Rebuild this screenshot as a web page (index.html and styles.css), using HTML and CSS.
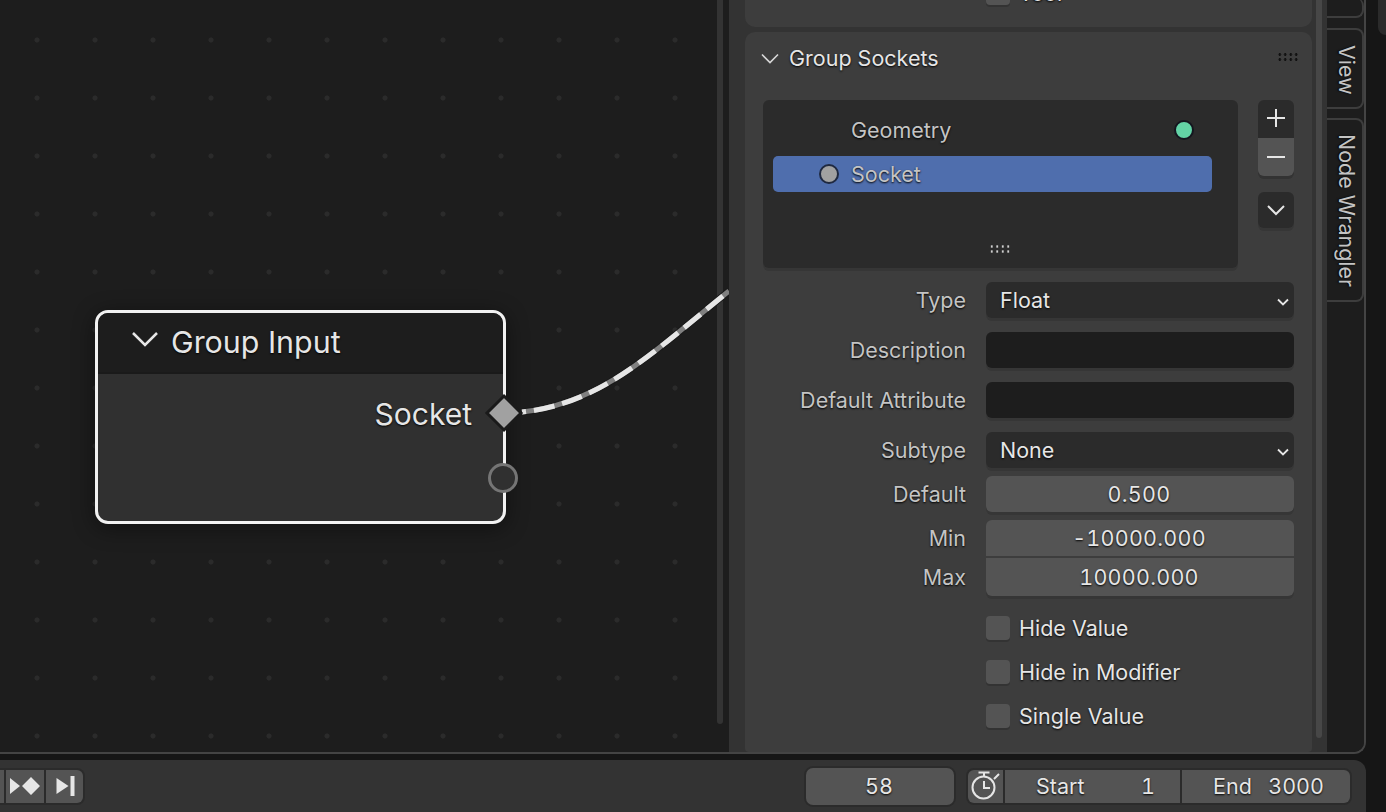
FILE: index.html
```html
<!DOCTYPE html>
<html lang="en">
<head>
    <meta charset="UTF-8">
    <title>Group Sockets</title>
    <link rel="stylesheet" href="styles.css">
</head>
<body>
  <div class="screen">
    <div class="corner-block"></div>

    <div class="editor">
      <!-- Node canvas -->
      <div class="canvas">
        <div class="canvas-scroll"></div>
        <svg class="wire" width="729" height="752" viewBox="0 0 729 752">
          <path class="wire-edge" d="M522 412 C600 404 650 355 729 291"/>
          <path class="wire-base" d="M522 412 C600 404 650 355 729 291"/>
          <path class="wire-dash" d="M522 412 C600 404 650 355 729 291"/>
        </svg>
        <div class="node">
          <div class="node-head">
            <svg class="node-arrow" width="28" height="18" viewBox="0 0 28 18"><path d="M2 2 L14 14 L26 2"/></svg>
            <span>Group Input</span>
          </div>
          <div class="node-body">
            <div class="node-output">Socket</div>
          </div>
        </div>
        <svg class="socket-diamond" width="40" height="40" viewBox="0 0 40 40"><path d="M20 3 L37 20 L20 37 L3 20 Z"/></svg>
        <div class="socket-empty"></div>
      </div>

      <!-- Sidebar -->
      <div class="sidebar">
        <div class="panel panel-cut">
          <div class="check-row cut-row">
            <div class="check"></div>
            <span>Tool</span>
          </div>
        </div>

        <div class="panel panel-main">
          <div class="panel-head">
            <svg class="panel-arrow" width="18" height="12" viewBox="0 0 18 12"><path d="M1 1.5 L9 9.5 L17 1.5"/></svg>
            <span>Group Sockets</span>
            <div class="grip grip-head"></div>
          </div>

          <div class="list-wrap">
            <div class="list-box">
              <div class="list-row">
                <span class="list-name">Geometry</span>
                <span class="dot dot-green"></span>
              </div>
              <div class="list-row list-row-active">
                <span class="dot dot-grey"></span>
                <span class="list-name">Socket</span>
              </div>
              <div class="grip grip-list"></div>
            </div>
            <div class="list-side">
              <div class="side-btn side-plus">
                <svg width="20" height="20" viewBox="0 0 20 20"><path d="M10 1 V19 M1 10 H19"/></svg>
              </div>
              <div class="side-btn side-minus">
                <svg width="20" height="20" viewBox="0 0 20 20"><path d="M1 10 H19"/></svg>
              </div>
              <div class="side-btn side-more">
                <svg width="20" height="12" viewBox="0 0 20 12"><path d="M2 2 L10 10 L18 2"/></svg>
              </div>
            </div>
          </div>

          <div class="prop-row row-type">
            <label>Type</label>
            <div class="field field-menu"><span>Float</span><svg width="12" height="8" viewBox="0 0 12 8"><path d="M1 1.5 L6 6.5 L11 1.5"/></svg></div>
          </div>
          <div class="prop-row row-text">
            <label>Description</label>
            <div class="field field-text"></div>
          </div>
          <div class="prop-row row-text">
            <label>Default Attribute</label>
            <div class="field field-text"></div>
          </div>
          <div class="prop-row row-text">
            <label>Subtype</label>
            <div class="field field-menu"><span>None</span><svg width="12" height="8" viewBox="0 0 12 8"><path d="M1 1.5 L6 6.5 L11 1.5"/></svg></div>
          </div>
          <div class="prop-row row-default">
            <label>Default</label>
            <div class="field field-num">0.500</div>
          </div>
          <div class="prop-row row-default">
            <label>Min</label>
            <div class="field field-num field-top">-10000.000</div>
          </div>
          <div class="prop-row row-max">
            <label>Max</label>
            <div class="field field-num field-bottom">10000.000</div>
          </div>

          <div class="check-row check-first"><div class="check"></div><span>Hide Value</span></div>
          <div class="check-row"><div class="check"></div><span>Hide in Modifier</span></div>
          <div class="check-row"><div class="check"></div><span>Single Value</span></div>
        </div>
        <div class="sidebar-scroll"></div>
      </div>

      <!-- Tabs -->
      <div class="tabs">
        <div class="tab tab-cut"></div>
        <div class="tab tab-view"><span>View</span></div>
        <div class="tab tab-wrangler"><span>Node Wrangler</span></div>
      </div>
    </div>

    <!-- Timeline -->
    <div class="timeline">
      <div class="btn-group play-group">
        <div class="play-btn play-stub"></div>
        <div class="play-btn play-key">
          <svg width="34" height="24" viewBox="0 0 34 24"><path d="M2 4 L12 12 L2 20 Z M23 3 L32 12 L23 21 L14 12 Z"/></svg>
        </div>
        <div class="play-btn play-end">
          <svg width="22" height="22" viewBox="0 0 22 22"><path d="M2.5 3 L14.5 11 L2.5 19 Z M16.5 1 H20.5 V21 H16.5 Z"/></svg>
        </div>
      </div>
      <div class="frame-now">58</div>
      <div class="btn-group range-group">
        <div class="range-seg range-icon">
          <svg width="30" height="32" viewBox="0 0 30 32">
            <path d="M7.5 2.5 H18.5 M13 2.5 V6"/>
            <circle cx="12.5" cy="17.5" r="11"/>
            <path d="M13 11 V18 H19 M23 9 L28 4"/>
          </svg>
        </div>
        <div class="range-seg range-start"><span>Start</span><span>1</span></div>
        <div class="range-seg range-end"><span>End</span><span>3000</span></div>
      </div>
    </div>
  </div>
</body>
</html>
```

FILE: styles.css
```css
* {
    box-sizing: border-box;
}

body {
    margin: 0;
    background-color: #161616;
    font-family: Inter, "Noto Sans", sans-serif;
    font-size: 21.5px;
    color: #e6e6e6;
    overflow: hidden;
}

svg {
    display: block;
    fill: none;
}

.screen {
    position: relative;
    width: 1386px;
    height: 812px;
    overflow: hidden;
}

.corner-block {
    position: absolute;
    left: 1378px;
    top: -10px;
    width: 30px;
    height: 45px;
    background: #2b2b2b;
    border-radius: 8px;
}

.editor {
    display: flex;
    width: 1366px;
    height: 754px;
    background: #1d1d1d;
    border-right: 2px solid #444;
    border-bottom: 2px solid #444;
    border-bottom-right-radius: 12px;
    overflow: hidden;
}

/* node canvas */
.canvas {
    position: relative;
    width: 729px;
    flex: none;
    background-color: #1d1d1d;
    background-image: radial-gradient(circle at center, #2b2b2b 0, #2b2b2b 2px, transparent 3px);
    background-size: 58px 58px;
    background-position: 8px 11px;
}

.canvas-scroll {
    position: absolute;
    left: 717px;
    top: 0;
    width: 6px;
    height: 724px;
    background: #333;
    border-radius: 0 0 3px 3px;
}

.wire {
    position: absolute;
    left: 0;
    top: 0;
}

.wire path {
    fill: none;
}

.wire-edge {
    stroke: #1a1a1a;
    stroke-width: 7;
}

.wire-base {
    stroke: #808080;
    stroke-width: 5;
}

.wire-dash {
    stroke: #e6e6e6;
    stroke-width: 5;
    stroke-dasharray: 21 8;
    stroke-dashoffset: -12;
}

.node {
    position: absolute;
    left: 95px;
    top: 310px;
    width: 411px;
    height: 214px;
    border: 3px solid #f2f2f2;
    border-radius: 13px;
    background: #303030;
    box-shadow: 0 4px 22px rgba(0, 0, 0, 0.45);
    overflow: hidden;
}

.node-head {
    display: flex;
    align-items: center;
    height: 61px;
    padding-left: 33px;
    background: #1d1d1d;
    border-bottom: 2px solid #1a1a1a;
    font-size: 30.4px;
    line-height: 1;
    text-shadow: 0 1px 2px #000;
}

.node-arrow {
    margin: -6px 12px 0 0;
}

.node-arrow path {
    stroke: #e6e6e6;
    stroke-width: 2.5;
}

.node-body {
    padding: 22px 31px 0 0;
}

.node-output {
    text-align: right;
    font-size: 30px;
    line-height: 36px;
    text-shadow: 0 1px 2px #000;
}

.socket-diamond {
    position: absolute;
    left: 484px;
    top: 393px;
}

.socket-diamond path {
    fill: #a1a1a1;
    stroke: #1a1a1a;
    stroke-width: 3;
}

.socket-empty {
    position: absolute;
    left: 488px;
    top: 463px;
    width: 30px;
    height: 30px;
    border: 3px solid #757575;
    border-radius: 50%;
    background: #303030;
}

/* sidebar */
.sidebar {
    position: relative;
    width: 598px;
    flex: none;
    padding-left: 16px;
    background: #333;
}

.panel {
    width: 567px;
    background: #3d3d3d;
    border-radius: 10px;
}

.panel-cut {
    height: 27px;
    border-radius: 0 0 10px 10px;
    overflow: hidden;
}

.cut-row {
    margin-top: -19px;
}

.panel-main {
    height: 720px;
    margin-top: 5px;
    padding: 0 18px;
    border-radius: 10px 10px 4px 4px;
}

.panel-head {
    position: relative;
    display: flex;
    align-items: center;
    height: 52px;
    text-shadow: 0 1px 2px #000;
}

.panel-arrow {
    margin: 2px 10px 0 -2px;
}

.panel-arrow path {
    stroke: #d8d8d8;
    stroke-width: 1.6;
}

.grip {
    position: absolute;
    width: 22px;
    height: 8px;
    background-image: radial-gradient(circle, #cfcfcf 0, #cfcfcf 1px, transparent 1.3px);
    background-size: 5.5px 5.5px;
}

.grip-head {
    right: -5px;
    top: 20px;
    height: 10px;
    background-image: radial-gradient(circle, #111 0, #111 1.2px, transparent 1.5px);
    background-size: 5.5px 5px;
}

.grip-list {
    left: 226px;
    bottom: 14px;
    height: 10px;
    background-size: 5.5px 5px;
}

.list-wrap {
    display: flex;
    margin-top: 16px;
    height: 168px;
}

.list-box {
    position: relative;
    width: 475px;
    padding: 12px 26px 0 10px;
    background: #2b2b2b;
    border-radius: 6px;
    box-shadow: 0 3px 0 #363636;
}

.list-row {
    display: flex;
    align-items: center;
    height: 36px;
    margin-bottom: 8px;
    padding-left: 78px;
    color: #c4c4c4;
    text-shadow: 0 1px 2px #000;
}

.list-row-active {
    padding-left: 46px;
    background: #4f6ead;
    border-radius: 5px;
}

.list-name {
    flex: 1;
}

.dot {
    display: block;
    flex: none;
    width: 20px;
    height: 20px;
    border: 2px solid #14161f;
    border-radius: 50%;
}

.dot-green {
    margin-right: 18px;
    background: #63d3a6;
}

.dot-grey {
    margin-right: 12px;
    background: #a1a1a1;
    border-color: #1f2940;
}

.list-side {
    margin-left: 20px;
    width: 36px;
}

.side-btn {
    display: flex;
    align-items: center;
    justify-content: center;
    background: #2b2b2b;
}

.side-btn path {
    stroke: #e6e6e6;
    stroke-width: 2;
}

.side-plus {
    height: 38px;
    padding-bottom: 2px;
    border-radius: 6px 6px 0 0;
}

.side-minus {
    height: 38px;
    background: #545454;
    border-radius: 0 0 6px 6px;
    box-shadow: 0 3px 0 #333;
}

.side-more {
    height: 36px;
    margin-top: 16px;
    border-radius: 6px;
    box-shadow: 0 3px 0 #363636;
}

.prop-row {
    display: flex;
    align-items: center;
    height: 36px;
    margin-top: 14px;
    color: #c4c4c4;
    text-shadow: 0 1px 2px #000;
}

.prop-row label {
    width: 203px;
    flex: none;
    text-align: right;
}

.row-type {
    margin-top: 14px;
}

.row-default {
    margin-top: 8px;
}

.row-max {
    height: 38px;
    margin-top: 2px;
}

.field {
    display: flex;
    align-items: center;
    width: 308px;
    height: 36px;
    margin-left: 20px;
    border-radius: 6px;
    color: #e6e6e6;
    box-shadow: 0 3px 0 #363636;
}

.row-max .field {
    height: 38px;
}

.field-menu {
    justify-content: space-between;
    padding: 0 5px 0 14px;
    background: #2b2b2b;
}

.field-menu svg {
    margin-top: 4px;
}

.field-menu path {
    stroke: #e6e6e6;
    stroke-width: 1.8;
}

.field-text {
    background: #1d1d1d;
}

.field-num {
    justify-content: center;
    padding-right: 2px;
    background: #545454;
    font-variant-numeric: tabular-nums;
    letter-spacing: 0.25px;
}

.field-top {
    border-radius: 6px 6px 0 0;
    box-shadow: none;
}

.field-bottom {
    border-radius: 0 0 6px 6px;
}

.check-row {
    display: flex;
    align-items: center;
    height: 24px;
    margin: 20px 0 0 223px;
    text-shadow: 0 1px 2px #000;
}

.panel-cut .check-row {
    margin-left: 241px;
    margin-top: -19px;
}

.check-first {
    margin-top: 20px;
}

.check {
    width: 24px;
    height: 24px;
    margin-right: 9px;
    background: #545454;
    border-radius: 4px;
    box-shadow: 0 2px 0 #333;
}

.sidebar-scroll {
    position: absolute;
    left: 587px;
    top: 0;
    width: 6px;
    height: 738px;
    background: #474747;
    border-radius: 0 0 3px 3px;
}

/* tabs */
.tabs {
    display: flex;
    flex-direction: column;
    width: 37px;
    flex: none;
    background: #1d1d1d;
}

.tab {
    display: flex;
    justify-content: center;
    padding-left: 2px;
    background: #1d1d1d;
    border: 2px solid #3d3d3d;
    border-left: none;
    border-radius: 0 8px 8px 0;
    color: #c4c4c4;
    writing-mode: vertical-rl;
    text-shadow: 0 1px 2px #000;
}

.tab span {
    padding-top: 2px;
    line-height: 30px;
    white-space: nowrap;
}

.tab-cut {
    height: 20px;
    margin-top: -2px;
    border-top: none;
}

.tab-view {
    height: 81px;
    margin-top: 10px;
}

.tab-wrangler {
    height: 184px;
    margin-top: 9px;
}

/* timeline */
.timeline {
    position: relative;
    display: flex;
    align-items: center;
    width: 1366px;
    height: 60px;
    margin-top: 6px;
    padding-bottom: 8px;
    background: #333;
    border-radius: 0 12px 0 0;
    font-variant-numeric: tabular-nums;
    text-shadow: 0 1px 2px #000;
}

.btn-group {
    display: flex;
    height: 37px;
    padding: 2px;
    background: #2b2b2b;
    border-radius: 8px;
}

.play-group {
    width: 85px;
    gap: 2px;
    border-radius: 0 8px 8px 0;
    padding-left: 0;
}

.play-btn {
    display: flex;
    align-items: center;
    justify-content: center;
    background: #545454;
}

.play-btn path {
    fill: #e6e6e6;
}

.play-stub {
    width: 4px;
}

.play-key {
    width: 38px;
}

.play-end {
    width: 37px;
    border-radius: 0 6px 6px 0;
}

.frame-now {
    display: flex;
    align-items: center;
    justify-content: center;
    width: 148px;
    height: 37px;
    margin-left: 721px;
    padding-right: 2px;
    background: #545454;
    border-radius: 7px;
    box-shadow: 0 0 0 2px #2b2b2b;
}

.range-group {
    width: 386px;
    margin-left: 12px;
    gap: 2px;
}

.range-seg {
    display: flex;
    align-items: center;
    background: #545454;
}

.range-icon {
    justify-content: center;
    width: 35px;
    border-radius: 6px 0 0 6px;
}

.range-icon svg {
    stroke: #e6e6e6;
    stroke-width: 2;
}

.range-start {
    justify-content: space-between;
    width: 175px;
    padding: 0 25px 0 31px;
}

.range-end {
    justify-content: space-between;
    width: 168px;
    padding: 0 26px 0 31px;
    border-radius: 0 6px 6px 0;
}
```
